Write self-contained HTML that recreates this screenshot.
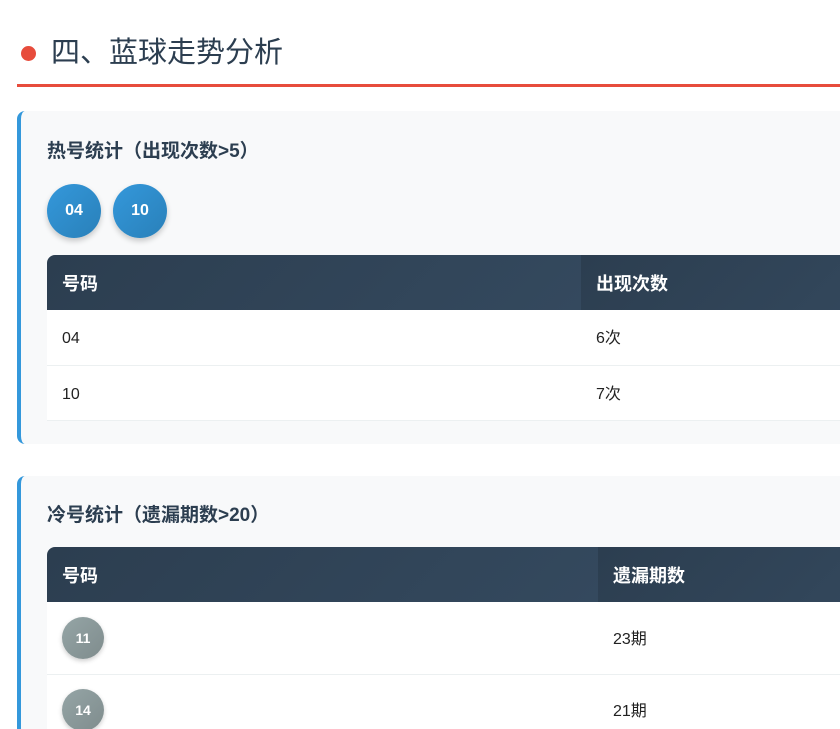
<!DOCTYPE html>
<html><head><meta charset="utf-8"><style>
*{box-sizing:border-box;margin:0;padding:0}
html,body{width:840px;height:729px;overflow:hidden}
body{background:#fff;font-family:"Liberation Sans","Noto Sans CJK SC",sans-serif;color:#2c3e50;position:relative}
.h{position:absolute;left:17px;top:30px;width:823px;height:57px;border-bottom:3px solid #e74c3c}
.h .dot{position:absolute;left:4px;top:16px;width:15px;height:15px;border-radius:50%;background:#e74c3c}
.h .t{position:absolute;left:34px;top:3px;font-size:29px;color:#2c3e50;line-height:40px}
.card{position:absolute;left:17px;width:823px;background:#f8f9fa;border-left:4px solid #3498db;border-radius:8px 0 0 8px;overflow:hidden}
.card h3{position:absolute;left:26px;font-size:19px;font-weight:bold;color:#2c3e50;line-height:26px}
.ball{position:absolute;border-radius:50%;color:#fff;font-weight:bold;display:flex;align-items:center;justify-content:center}
.blue{width:54px;height:54px;background:linear-gradient(135deg,#3498db,#2980b9);box-shadow:0 3px 6px rgba(0,0,0,.2);font-size:16px}
.gray{width:42px;height:42px;background:linear-gradient(135deg,#95a5a6,#7f8c8d);box-shadow:0 2px 5px rgba(0,0,0,.2);font-size:14px}
.ib{position:static;display:flex}
table{position:absolute;left:26px;width:880px;border-collapse:collapse;background:#fff;border-radius:8px 0 0 0;overflow:hidden}
th{background:linear-gradient(135deg,#2c3e50,#34495e);color:#fff;text-align:left;font-size:18px;font-weight:bold;padding:3px 15px 0;height:55px;line-height:24px}
td{font-size:16px;color:#222;padding:4px 15px 0;border-bottom:1px solid #ecf0f1;vertical-align:middle;line-height:24px}
td.b{padding-top:0}
</style></head><body>
<div class="h"><div class="dot"></div><div class="t">四、蓝球走势分析</div></div>

<div class="card" style="top:111px;height:333px">
<h3 style="top:28px">热号统计（出现次数&gt;5）</h3>
<div class="ball blue" style="left:26px;top:73px">04</div>
<div class="ball blue" style="left:92px;top:73px">10</div>
<table style="top:144px">
<tr><th style="width:534px">号码</th><th>出现次数</th></tr>
<tr><td style="height:55px">04</td><td>6次</td></tr>
<tr><td style="height:55px">10</td><td>7次</td></tr>
</table>
</div>

<div class="card" style="top:476px;height:253px;border-radius:8px 0 0 0">
<h3 style="top:27px">冷号统计（遗漏期数&gt;20）</h3>
<table style="top:71px">
<tr><th style="width:551px">号码</th><th>遗漏期数</th></tr>
<tr><td class="b" style="height:72px"><div class="ball gray ib">11</div></td><td>23期</td></tr>
<tr><td class="b" style="height:72px"><div class="ball gray ib">14</div></td><td>21期</td></tr>
</table>
</div>
</body></html>
